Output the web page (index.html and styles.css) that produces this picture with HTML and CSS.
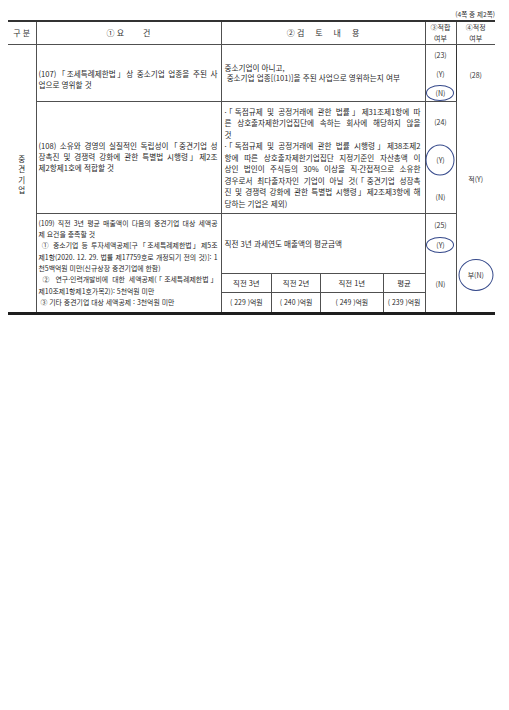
FILE: index.html
```html
<!DOCTYPE html>
<html lang="ko">
<head>
<meta charset="utf-8">
<title>중견기업 검토서</title>
<link rel="stylesheet" href="styles.css">
</head>
<body>
<div class="page">
  <div class="pageno">(4쪽 중 제2쪽)</div>
  <table class="form">
    <colgroup>
      <col class="c1"><col class="c2"><col class="c3"><col class="c4"><col class="c5">
    </colgroup>
    <thead>
      <tr class="hd">
        <th class="first big">구 분</th>
        <th class="big">① 요<span class="gap"></span>건</th>
        <th class="big">② <span class="wide">검토내용</span></th>
        <th class="small">③적합<br>여부</th>
        <th class="small last">④적정<br>여부</th>
      </tr>
    </thead>
    <tbody>
      <tr class="r1">
        <td rowspan="3" class="cat">중<br>견<br>기<br>업</td>
        <td class="req req1">
          <span class="ln j">(107)「조세특례제한법」상 중소기업 업종을 주된 사</span>
          <span class="ln">업으로 영위할 것</span>
        </td>
        <td class="rev">
          <span class="ln">중소기업이 아니고,</span>
          <span class="ln">&nbsp;중소기업 업종[(101)]을 주된 사업으로 영위하는지 여부</span>
        </td>
        <td class="chk">
          <div class="marks m1">
            <span>(23)</span>
            <span>(Y)</span>
            <span><span class="mark ov-sm">(N)</span></span>
          </div>
        </td>
        <td rowspan="3" class="final last">
          <div class="finals">
            <span class="f1">(28)</span>
            <span class="f2">적(Y)</span>
            <span class="f3"><span class="mark ov-big">부(N)</span></span>
          </div>
        </td>
      </tr>
      <tr class="r2">
        <td class="req">
          <span class="ln j">(108) 소유와 경영의 실질적인 독립성이「중견기업 성</span>
          <span class="ln j">장촉진 및 경쟁력 강화에 관한 특별법 시행령」제2조</span>
          <span class="ln">제2항제1호에 적합할 것</span>
        </td>
        <td class="rev rev2">
          <span class="ln j">·「독점규제 및 공정거래에 관한 법률」제31조제1항에 따</span>
          <span class="ln j">른 상호출자제한기업집단에 속하는 회사에 해당하지 않을</span>
          <span class="ln">것</span>
          <span class="ln j">·「독점규제 및 공정거래에 관한 법률 시행령」제38조제2</span>
          <span class="ln j">항에 따른 상호출자제한기업집단 지정기준인 자산총액 이</span>
          <span class="ln j">상인 법인이 주식등의 30% 이상을 직·간접적으로 소유한</span>
          <span class="ln j">경우로서 최다출자자인 기업이 아닐 것(「중견기업 성장촉</span>
          <span class="ln j">진 및 경쟁력 강화에 관한 특별법 시행령」제2조제3항에 해</span>
          <span class="ln">당하는 기업은 제외)</span>
        </td>
        <td class="chk">
          <div class="marks m2">
            <span>(24)</span>
            <span><span class="mark ov-lg">(Y)</span></span>
            <span>(N)</span>
          </div>
        </td>
      </tr>
      <tr class="r3">
        <td class="req req3">
          <span class="ln j">(109) 직전 3년 평균 매출액이 다음의 중견기업 대상 세액공</span>
          <span class="ln">제 요건을 충족할 것</span>
          <span class="ln j">&nbsp;① 중소기업 등 투자세액공제[구「조세특례제한법」제5조</span>
          <span class="ln j">제1항(2020. 12. 29. 법률 제17759호로 개정되기 전의 것)]: 1</span>
          <span class="ln">천5백억원 미만(신규상장 중견기업에 한함)</span>
          <span class="ln j">&nbsp;② 연구·인력개발비에 대한 세액공제(「조세특례제한법」</span>
          <span class="ln">제10조제1항제1호가목2)): 5천억원 미만</span>
          <span class="ln">&nbsp;③ 기타 중견기업 대상 세액공제 : 3천억원 미만</span>
        </td>
        <td class="rev rev3">
          <div class="rev3-box">
            <div class="avg">직전 3년 과세연도 매출액의 평균금액</div>
            <div class="years">
              <div class="yh">직전 3년</div>
              <div class="yh">직전 2년</div>
              <div class="yh">직전 1년</div>
              <div class="yh">평균</div>
              <div class="yv">( 229 )억원</div>
              <div class="yv">( 240 )억원</div>
              <div class="yv">( 249 )억원</div>
              <div class="yv">( 239 )억원</div>
            </div>
          </div>
        </td>
        <td class="chk">
          <div class="marks m3">
            <span>(25)</span>
            <span class="y3"><span class="mark ov-sm">(Y)</span></span>
            <span class="n3">(N)</span>
          </div>
        </td>
      </tr>
    </tbody>
  </table>
</div>
</body>
</html>
```

FILE: styles.css
```css
* {
  box-sizing: border-box;
}

html,
body {
  margin: 0;
  padding: 0;
  background: #ffffff;
}

body {
  font-family: "Noto Sans CJK KR", "Noto Sans", sans-serif;
  color: #1f1f1f;
}

.page {
  width: 509px;
  height: 710px;
  padding: 8px 14px 0 8px;
}

.pageno {
  text-align: right;
  font-size: 6.6px;
  line-height: 12px;
  height: 12px;
  color: #333333;
}

.form {
  width: 487px;
  border-collapse: collapse;
  table-layout: fixed;
  border-top: 2px solid #333333;
  border-bottom: 3px solid #1e1e1e;
}

col.c1 { width: 28px; }
col.c2 { width: 185px; }
col.c3 { width: 204px; }
col.c4 { width: 31px; }
col.c5 { width: 39px; }

.form th,
.form td {
  border: 1px solid #505050;
  padding: 0;
  vertical-align: middle;
  font-weight: normal;
}

.form .first,
.form .cat {
  border-left: none;
}

.form .last {
  border-right: none;
}

.form .chk {
  border-right: 1px solid #333333;
}

/* header */
.hd {
  height: 22px;
}

.hd th {
  text-align: center;
  color: #333333;
}

.hd th.big {
  font-size: 8px;
  line-height: 10px;
}

.hd th.small {
  font-size: 7px;
  line-height: 11px;
}

.gap {
  display: inline-block;
  width: 19px;
}

.wide {
  letter-spacing: 11px;
  margin-right: -11px;
}

.r1 { height: 57px; }
.r2 { height: 112px; }
.r3 { height: 99px; }

/* category */
.cat {
  text-align: center;
  font-size: 7.5px;
  line-height: 10.3px;
  padding-bottom: 8px !important;
}

/* text lines */
.ln {
  display: block;
  white-space: nowrap;
}

.ln.j {
  text-align: justify;
  text-align-last: justify;
}

.req {
  font-size: 7.6px;
  line-height: 10.7px;
  padding: 0 3px 0 2px !important;
}

.req1 {
  padding-top: 13px !important;
}

.req3 {
  font-size: 6.9px;
  line-height: 11.3px;
}

.rev {
  font-size: 7.6px;
  line-height: 10.4px;
  padding: 0 4px 0 3px !important;
}

.rev2 {
  line-height: 11.5px;
}

.rev.rev3 {
  padding: 0 !important;
}

.rev3-box {
  height: 98px;
  display: flex;
  flex-direction: column;
}

.avg {
  flex: 1;
  display: flex;
  align-items: center;
  padding-left: 3px;
  padding-top: 2px;
}

.years {
  display: grid;
  grid-template-columns: 50fr 49fr 63fr 42fr;
  grid-template-rows: 19px 19px;
  border-top: 1px solid #505050;
}

.yh,
.yv {
  display: flex;
  align-items: center;
  justify-content: center;
  border-left: 1px solid #505050;
  white-space: nowrap;
}

.yh:nth-child(4n + 1),
.yv:nth-child(4n + 1) {
  border-left: none;
}

.yh {
  font-size: 7.4px;
  border-bottom: 1px solid #505050;
}

.yv {
  font-size: 6.9px;
}

/* check column */
.chk {
  vertical-align: top !important;
}

.marks {
  display: flex;
  flex-direction: column;
  align-items: center;
  font-size: 7px;
  line-height: 12px;
  color: #333333;
}

.m1 {
  height: 56px;
  justify-content: space-between;
  padding: 4px 0 2px;
}

.m2 {
  height: 111px;
  justify-content: space-between;
  padding: 14px 0 10px;
}

.m3 {
  padding-top: 5px;
}

.m3 .y3 {
  margin-top: 8px;
}

.m3 .n3 {
  margin-top: 27px;
}

/* final column */
.final {
  vertical-align: top !important;
}

.finals {
  display: flex;
  flex-direction: column;
  align-items: center;
  font-size: 7px;
  line-height: 12px;
  color: #333333;
}

.f1 { margin-top: 24px; }
.f2 { margin-top: 92px; }
.f3 { margin-top: 84px; }

/* hand-drawn circles */
.mark {
  position: relative;
  display: inline-block;
}

.mark::after {
  content: "";
  position: absolute;
  left: 50%;
  top: 50%;
  transform: translate(-50%, -50%);
  border: 1.6px solid #34488a;
  border-radius: 50%;
}

.ov-sm::after {
  width: 26px;
  height: 14px;
}

.ov-lg::after {
  width: 27px;
  height: 29px;
}

.ov-big::after {
  width: 33px;
  height: 30px;
}
```
